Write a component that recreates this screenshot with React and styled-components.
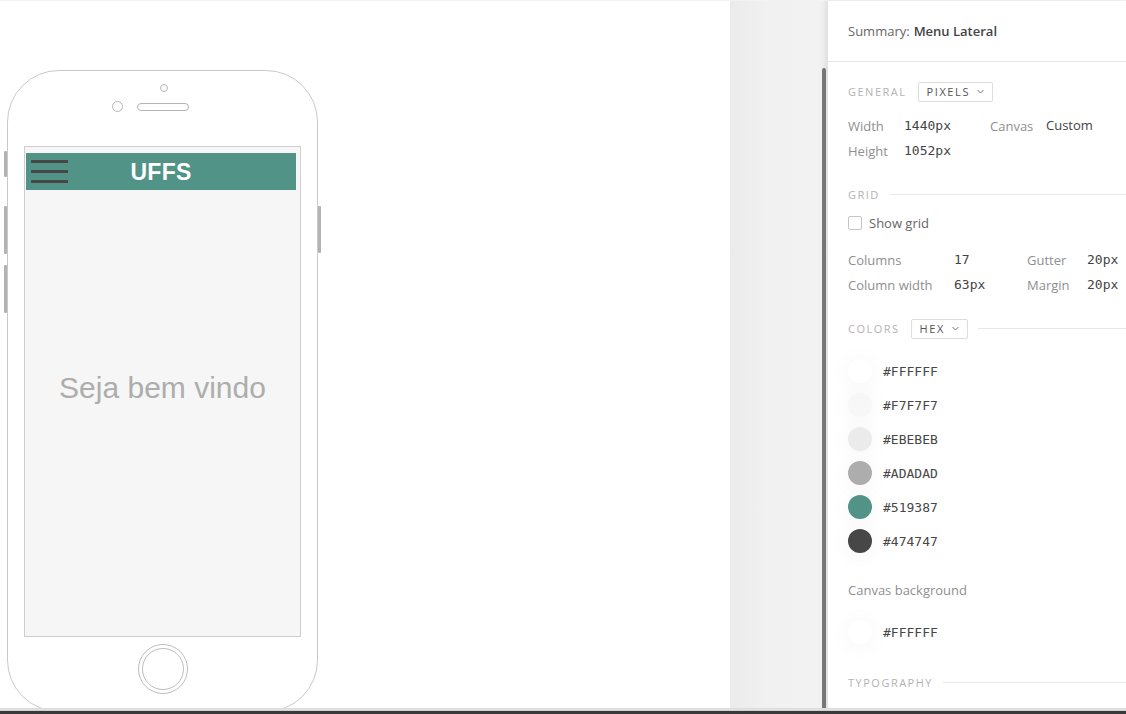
import React from 'react';
import styled, { createGlobalStyle } from 'styled-components';

const GlobalStyle = createGlobalStyle`
  html, body {
    margin: 0;
    padding: 0;
    background: #ffffff;
    overflow: hidden;
  }
  * {
    box-sizing: border-box;
  }
`;

const Frame = styled.div`
  width: 1126px;
  height: 714px;
  display: flex;
  flex-direction: column;
  font-family: 'Open Sans', 'Liberation Sans', sans-serif;
`;

const Workspace = styled.div`
  flex: 1;
  display: flex;
  min-height: 0;
  border-top: 1px solid #f2f2f2;
`;

const BottomBar = styled.div`
  height: 6px;
  background: linear-gradient(to bottom, #d6d6d6 0%, #ededed 40%, #3a3a3a 50%, #3a3a3a 100%);
`;

const Canvas = styled.div`
  width: 730px;
  background: #ffffff;
  padding: 69px 0 0 7px;
  overflow: hidden;
`;

const Gutter = styled.div`
  width: 98px;
  background: linear-gradient(to right, #ebebeb 0%, #f1f1f1 40%, #f2f2f2 90%, #e9e9e9 100%);
  display: flex;
  justify-content: flex-end;
  padding: 67px 2px 0 0;
`;

const ScrollThumb = styled.div`
  width: 4px;
  height: 100%;
  background: #777777;
  border-radius: 2px 2px 0 0;
`;

/* ---------- phone ---------- */

const Phone = styled.div`
  position: relative;
  width: 311px;
  height: 642px;
  border: 1px solid #c9c9c9;
  border-radius: 52px;
  background: #ffffff;
  display: flex;
  flex-direction: column;
  align-items: center;
`;

const SideButton = styled.div`
  position: absolute;
  width: 3px;
  top: ${(p) => p.$top}px;
  height: ${(p) => p.$h}px;
  ${(p) => (p.$right ? 'right: -4px;' : 'left: -4px;')}
  background: #b3b3b3;
  border-radius: 1px;
`;

const PhoneTop = styled.div`
  height: 75px;
  display: flex;
  flex-direction: column;
  align-items: center;
  padding-top: 13px;
`;

const Camera = styled.div`
  width: 8px;
  height: 8px;
  border: 1px solid #b5b5b5;
  border-radius: 50%;
  margin-left: 2px;
`;

const SpeakerRow = styled.div`
  display: flex;
  align-items: center;
  gap: 14px;
  margin-top: 9px;
  margin-left: -25px;
`;

const Lens = styled.div`
  width: 11px;
  height: 11px;
  border: 1px solid #b5b5b5;
  border-radius: 50%;
`;

const Speaker = styled.div`
  width: 52px;
  height: 8px;
  border: 1px solid #b5b5b5;
  border-radius: 4px;
`;

const Screen = styled.div`
  width: 277px;
  height: 491px;
  border: 1px solid #cfcfcf;
  background: #f6f6f6;
  display: flex;
  flex-direction: column;
`;

const AppBar = styled.div`
  height: 37px;
  margin: 6px 4px 0 1px;
  background: #519387;
  display: flex;
  align-items: center;
  padding-left: 5px;
`;

const Burger = styled.div`
  display: flex;
  flex-direction: column;
  gap: 7px;
`;

const BurgerLine = styled.div`
  width: 37px;
  height: 3px;
  background: #474747;
`;

const AppTitle = styled.div`
  flex: 1;
  text-align: center;
  margin-left: -42px;
  margin-top: 1px;
  color: #ffffff;
  font-family: 'Liberation Sans', Arial, sans-serif;
  font-weight: 700;
  font-size: 23px;
  letter-spacing: 0.3px;
`;

const ScreenBody = styled.div`
  flex: 1;
  display: flex;
  align-items: center;
  justify-content: center;
  padding-bottom: 50px;
`;

const Welcome = styled.div`
  color: #adadad;
  font-family: 'Liberation Sans', Arial, sans-serif;
  font-size: 30px;
`;

const PhoneBottom = styled.div`
  flex: 1;
  display: flex;
  justify-content: center;
  padding-top: 7px;
`;

const HomeButton = styled.div`
  width: 50px;
  height: 50px;
  border: 1px solid #bdbdbd;
  border-radius: 50%;
  display: flex;
  align-items: center;
  justify-content: center;
`;

const HomeInner = styled.div`
  width: 42px;
  height: 42px;
  border: 1px solid #bdbdbd;
  border-radius: 50%;
`;

/* ---------- side panel ---------- */

const Panel = styled.div`
  flex: 1;
  background: #ffffff;
  box-shadow: -2px 0 4px rgba(0, 0, 0, 0.05);
  display: flex;
  flex-direction: column;
  overflow: hidden;
`;

const SummaryBar = styled.div`
  height: 61px;
  border-bottom: 1px solid #e6e6e6;
  display: flex;
  align-items: center;
  padding: 0 20px 1px;
  font-size: 13px;
  color: #666666;
`;

const Strong = styled.span`
  font-weight: 600;
  color: #444444;
  margin-left: 4px;
`;

const Body = styled.div`
  padding: 20px 0 0 20px;
  display: flex;
  flex-direction: column;
`;

const SectionHead = styled.div`
  display: flex;
  align-items: center;
  gap: 11px;
  height: 19px;
  margin-top: ${(p) => p.$mt || 0}px;
`;

const SectionLabel = styled.span`
  font-size: 11px;
  letter-spacing: 1.5px;
  color: #b3b3b3;
`;

const Rule = styled.div`
  flex: 1;
  height: 1px;
  background: #e8e8e8;
  margin-left: -1px;
`;

const Dropdown = styled.div`
  height: 20px;
  border: 1px solid #dcdcdc;
  border-radius: 2px;
  display: flex;
  align-items: center;
  gap: 7px;
  padding: 0 8px;
  font-size: 11px;
  letter-spacing: 1.6px;
  color: #555555;
`;

const PropGrid = styled.div`
  display: grid;
  grid-template-columns: ${(p) => p.$cols};
  grid-auto-rows: 25px;
  align-items: center;
  margin-top: ${(p) => p.$mt || 0}px;
`;

const Label = styled.span`
  font-size: 13px;
  color: #8f8f8f;
  margin-top: 3px;
`;

const Value = styled.span`
  font-family: ${(p) => (p.$sans ? "'Open Sans', 'Liberation Sans', sans-serif" : "'DejaVu Sans Mono', monospace")};
  font-size: 13px;
  color: #444444;
  margin-top: ${(p) => (p.$sans ? 1 : 2)}px;
`;

const CheckRow = styled.label`
  display: flex;
  align-items: center;
  gap: 7px;
  margin-top: 10px;
  font-size: 13px;
  color: #666666;
`;

const CheckBox = styled.span`
  width: 14px;
  height: 14px;
  border: 1px solid #c6c6c6;
  border-radius: 2px;
  background: #ffffff;
`;

const SwatchList = styled.div`
  display: flex;
  flex-direction: column;
  gap: 10px;
  margin-top: ${(p) => p.$mt || 0}px;
`;

const SwatchRow = styled.div`
  display: flex;
  align-items: center;
  gap: 11px;
  height: 24px;
`;

const Swatch = styled.span`
  width: 24px;
  height: 24px;
  border-radius: 50%;
  background: ${(p) => p.$color};
  box-shadow: 0 2px 22px rgba(0, 0, 0, 0.05);
`;

const HexText = styled.span`
  font-family: 'DejaVu Sans Mono', monospace;
  font-size: 13px;
  color: #474747;
`;

const SubLabel = styled.div`
  font-size: 13px;
  color: #8f8f8f;
  margin-top: 28px;
`;

const Chevron = () => (
  <svg width="7" height="5" viewBox="0 0 7 5">
    <path d="M0.5 1 L3.5 4 L6.5 1" fill="none" stroke="#777" strokeWidth="1" />
  </svg>
);

const colors = ['#FFFFFF', '#F7F7F7', '#EBEBEB', '#ADADAD', '#519387', '#474747'];

const App = () => {
  return (
    <>
      <GlobalStyle />
      <Frame>
        <Workspace>
          <Canvas>
            <Phone>
              <SideButton $top={80} $h={26} />
              <SideButton $top={135} $h={48} />
              <SideButton $top={194} $h={48} />
              <SideButton $right $top={135} $h={47} />
              <PhoneTop>
                <Camera />
                <SpeakerRow>
                  <Lens />
                  <Speaker />
                </SpeakerRow>
              </PhoneTop>
              <Screen>
                <AppBar>
                  <Burger>
                    <BurgerLine />
                    <BurgerLine />
                    <BurgerLine />
                  </Burger>
                  <AppTitle>UFFS</AppTitle>
                </AppBar>
                <ScreenBody>
                  <Welcome>Seja bem vindo</Welcome>
                </ScreenBody>
              </Screen>
              <PhoneBottom>
                <HomeButton>
                  <HomeInner />
                </HomeButton>
              </PhoneBottom>
            </Phone>
          </Canvas>
          <Gutter>
            <ScrollThumb />
          </Gutter>
          <Panel>
            <SummaryBar>
              Summary:<Strong>Menu Lateral</Strong>
            </SummaryBar>
            <Body>
              <SectionHead>
                <SectionLabel>GENERAL</SectionLabel>
                <Dropdown>
                  PIXELS <Chevron />
                </Dropdown>
              </SectionHead>
              <PropGrid $cols="56px 86px 56px 1fr" $mt={11}>
                <Label>Width</Label>
                <Value>1440px</Value>
                <Label>Canvas</Label>
                <Value $sans>Custom</Value>
                <Label>Height</Label>
                <Value>1052px</Value>
              </PropGrid>

              <SectionHead $mt={23}>
                <SectionLabel>GRID</SectionLabel>
                <Rule />
              </SectionHead>
              <CheckRow>
                <CheckBox />
                Show grid
              </CheckRow>
              <PropGrid $cols="106px 73px 60px 1fr" $mt={14}>
                <Label>Columns</Label>
                <Value>17</Value>
                <Label>Gutter</Label>
                <Value>20px</Value>
                <Label>Column width</Label>
                <Value>63px</Value>
                <Label>Margin</Label>
                <Value>20px</Value>
              </PropGrid>

              <SectionHead $mt={23}>
                <SectionLabel>COLORS</SectionLabel>
                <Dropdown>
                  HEX <Chevron />
                </Dropdown>
                <Rule />
              </SectionHead>
              <SwatchList $mt={21}>
                {colors.map((c) => (
                  <SwatchRow key={c}>
                    <Swatch $color={c} />
                    <HexText>{c}</HexText>
                  </SwatchRow>
                ))}
              </SwatchList>

              <SubLabel>Canvas background</SubLabel>
              <SwatchList $mt={21}>
                <SwatchRow>
                  <Swatch $color="#FFFFFF" />
                  <HexText>#FFFFFF</HexText>
                </SwatchRow>
              </SwatchList>

              <SectionHead $mt={29}>
                <SectionLabel>TYPOGRAPHY</SectionLabel>
                <Rule />
              </SectionHead>
            </Body>
          </Panel>
        </Workspace>
        <BottomBar />
      </Frame>
    </>
  );
};

export default App;
